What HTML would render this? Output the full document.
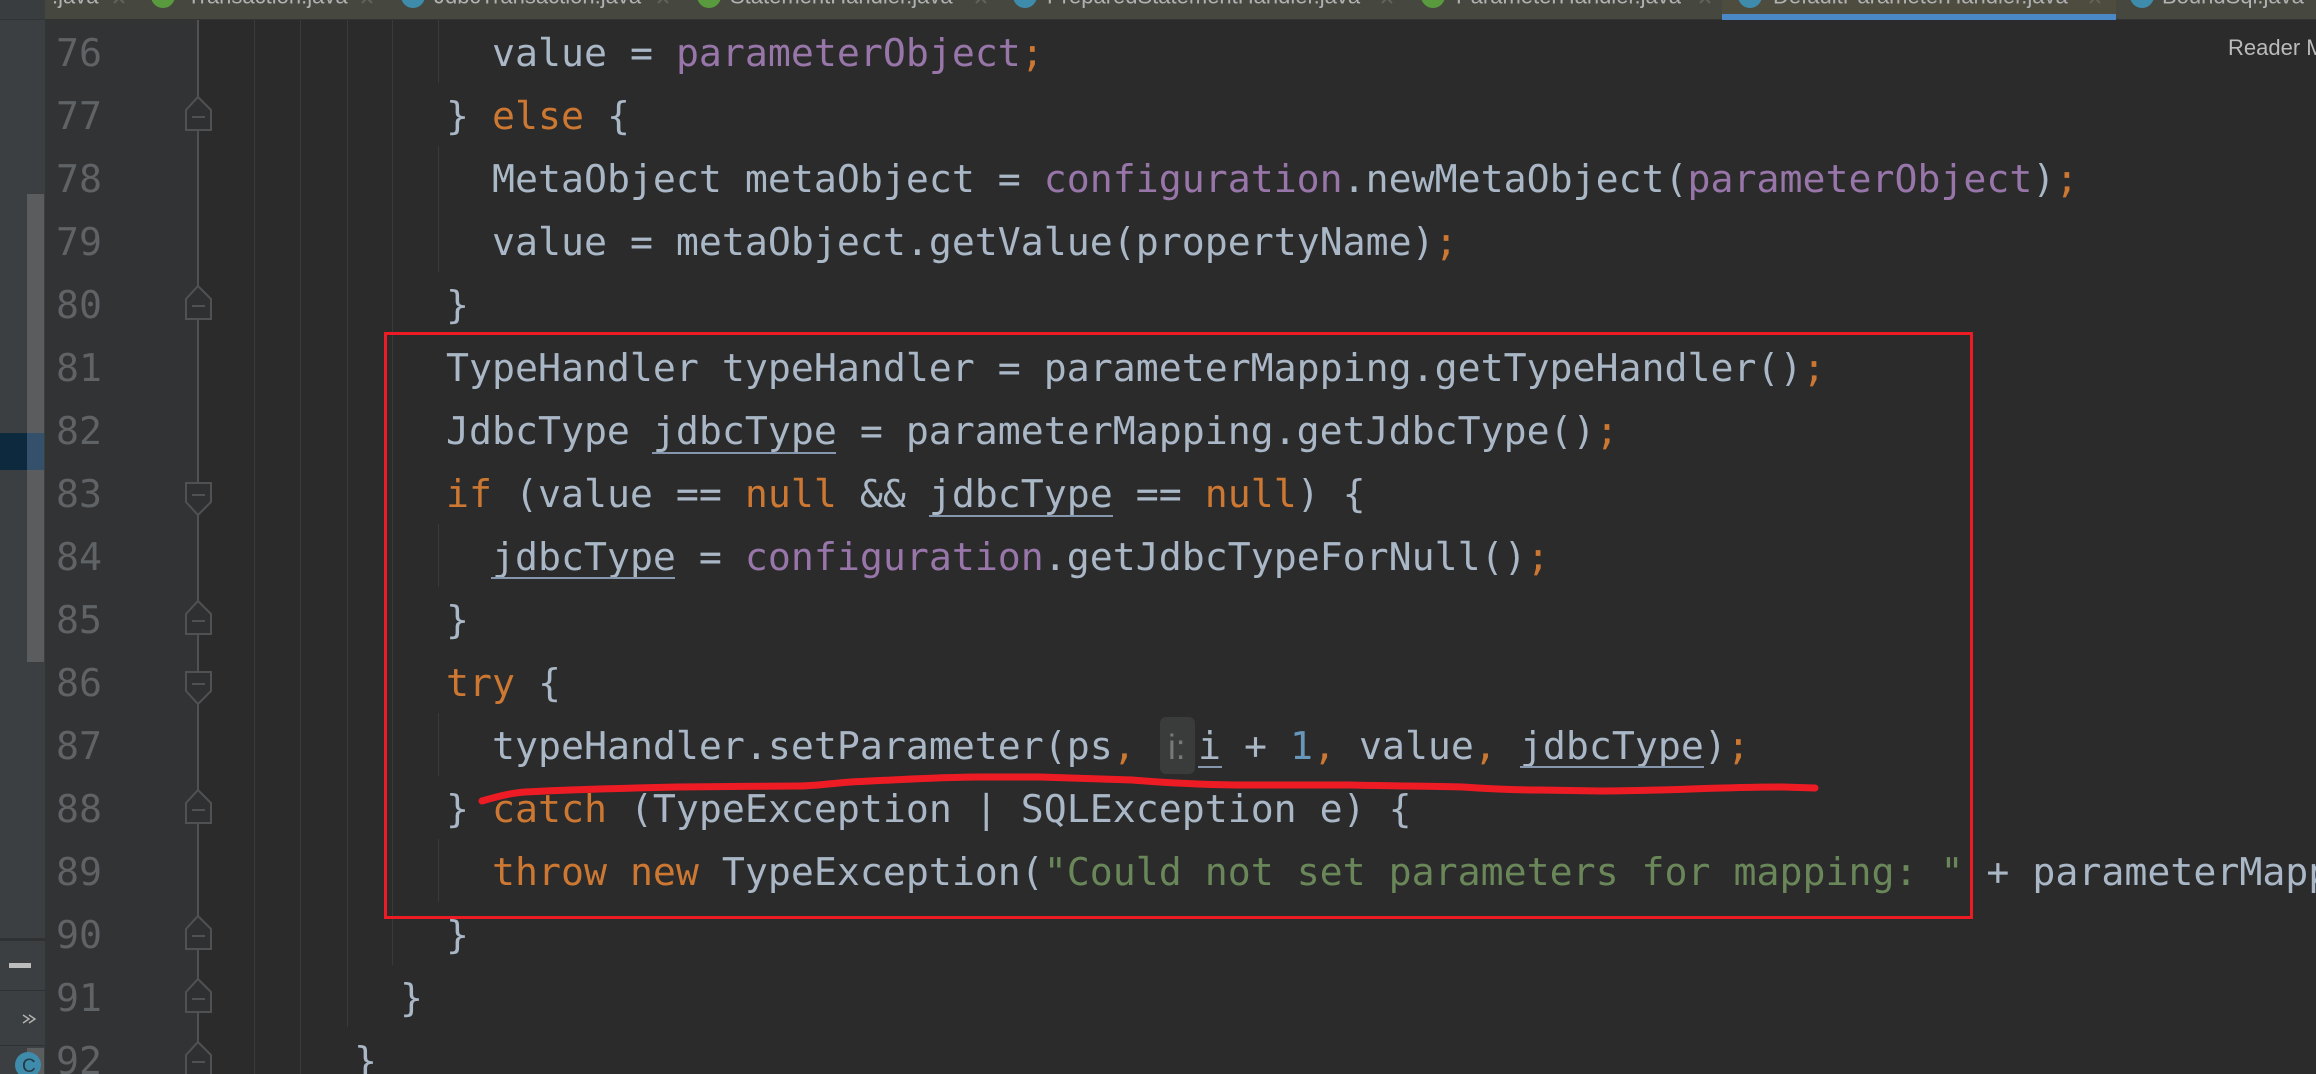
<!DOCTYPE html>
<html lang="en">
<head>
<meta charset="utf-8">
<title>DefaultParameterHandler.java</title>
<style>
html,body{margin:0;padding:0;background:#2b2b2b;width:2316px;height:1074px;overflow:hidden}
svg{display:block;position:absolute;left:0;top:0}
.c{font-family:"DejaVu Sans Mono","Liberation Mono",monospace;font-size:38.2px;fill:#a9b7c6;text-rendering:geometricPrecision}
.n{font-family:"DejaVu Sans Mono","Liberation Mono",monospace;font-size:38.2px;fill:#606366;text-rendering:geometricPrecision}
.o{fill:#cc7832}.p{fill:#9876aa}.g{fill:#6a8759}.b{fill:#6897bb}
.t{font-family:"Liberation Sans",sans-serif;font-size:22px;fill:#afb1b3}
.m{fill:none;stroke:#4f5153;stroke-width:2}
.u{fill:#8596ad}
</style>
</head>
<body>
<svg width="2316" height="1074" viewBox="0 0 2316 1074" xmlns="http://www.w3.org/2000/svg">
<!-- backgrounds -->
<rect width="2316" height="1074" fill="#2b2b2b"/>
<rect x="0" y="0" width="45" height="1074" fill="#3c3f41"/>
<rect x="45" y="0" width="153" height="1074" fill="#313335"/>
<rect x="0" y="0" width="45" height="19" fill="#3a3d3f"/>
<rect x="0" y="19" width="45" height="1" fill="#323436"/>
<rect x="45" y="0" width="2271" height="19" fill="#46473f"/>
<rect x="45" y="19" width="2271" height="1" fill="#333333"/>
<rect x="1722" y="0" width="394" height="14" fill="#4e4b3f"/>
<rect x="1722" y="14" width="394" height="6" fill="#4a88c7"/>

<!-- tabs -->
<g>
<circle cx="163" cy="-4" r="12" fill="#5a9a3e"/>
<circle cx="413" cy="-4" r="12" fill="#3e8bac"/>
<circle cx="709" cy="-4" r="12" fill="#5a9a3e"/>
<circle cx="1025" cy="-4" r="12" fill="#3e8bac"/>
<circle cx="1433" cy="-4" r="12" fill="#5a9a3e"/>
<circle cx="1750" cy="-4" r="12" fill="#3e8bac"/>
<circle cx="2142" cy="-4" r="12" fill="#3e8bac"/>
<text class="t" x="52" y="3.5">.java</text>
<text class="t" x="187" y="3.5">Transaction.java</text>
<text class="t" x="434" y="3.5">JdbcTransaction.java</text>
<text class="t" x="730" y="3.5">StatementHandler.java</text>
<text class="t" x="1047" y="3.5">PreparedStatementHandler.java</text>
<text class="t" x="1456" y="3.5">ParameterHandler.java</text>
<text class="t" x="1773" y="3.5">DefaultParameterHandler.java</text>
<text class="t" x="2162" y="3.5">BoundSql.java</text>
<path d="M114 3l5-5 5 5M362 3l5-5 5 5M658 3l5-5 5 5M976 3l5-5 5 5M1382 3l5-5 5 5M1700 3l5-5 5 5M2090 3l5-5 5 5" fill="none" stroke="#626359" stroke-width="2"/>
</g>

<text x="2228" y="55" font-family="'Liberation Sans',sans-serif" font-size="22" fill="#bbbbbb">Reader M</text>

<!-- left strip -->
<rect x="27" y="194" width="17" height="468" fill="#5a5c5e"/>
<rect x="0" y="433" width="27" height="37" fill="#0d293e"/>
<rect x="27" y="433" width="17" height="37" fill="#34506a"/>
<rect x="0" y="938" width="45" height="3" fill="#2f3132"/>
<rect x="9" y="963" width="22" height="5" fill="#bdbdbd"/>
<rect x="0" y="990" width="45" height="1" fill="#2f3132"/>
<path d="M23 1015l6 4-6 4M29 1015l6 4-6 4" fill="none" stroke="#b5b5b5" stroke-width="1.4"/>
<rect x="0" y="1045" width="45" height="1" fill="#2f3132"/>
<rect x="27" y="1048" width="17" height="26" fill="#5a5c5e"/>
<circle cx="28" cy="1065" r="13" fill="#3e8bac"/>
<text x="22" y="1072" font-family="'Liberation Sans',sans-serif" font-size="19" fill="#243a44">C</text>

<!-- indent guides -->
<g fill="#393b3b">
<rect x="254" y="20" width="1" height="1054"/>
<rect x="300" y="20" width="1" height="1054"/>
<rect x="347" y="20" width="1" height="1007"/>
<rect x="392" y="20" width="1" height="945"/>
<rect x="438" y="20" width="1" height="63"/>
<rect x="438" y="146" width="1" height="126"/>
<rect x="438" y="524" width="1" height="63"/>
<rect x="438" y="713" width="1" height="63"/>
<rect x="438" y="839" width="1" height="63"/>
</g>

<!-- fold column -->
<rect x="197" y="20" width="2" height="1054" fill="#4f5153"/>
<g class="markers">
<g><path class="m" d="M198 97L211 110V130H186V110Z" style="fill:#2f3032"/><path d="M192 117H205" class="m"/></g>
<g><path class="m" d="M198 286L211 299V319H186V299Z" style="fill:#2f3032"/><path d="M192 306H205" class="m"/></g>
<g><path class="m" d="M186 483H211V502L198 515L186 502Z" style="fill:#2f3032"/><path d="M192 495H205" class="m"/></g>
<g><path class="m" d="M198 601L211 614V634H186V614Z" style="fill:#2f3032"/><path d="M192 621H205" class="m"/></g>
<g><path class="m" d="M186 672H211V691L198 704L186 691Z" style="fill:#2f3032"/><path d="M192 684H205" class="m"/></g>
<g><path class="m" d="M198 790L211 803V823H186V803Z" style="fill:#2f3032"/><path d="M192 810H205" class="m"/></g>
<g><path class="m" d="M198 916L211 929V949H186V929Z" style="fill:#2f3032"/><path d="M192 936H205" class="m"/></g>
<g><path class="m" d="M198 979L211 992V1012H186V992Z" style="fill:#2f3032"/><path d="M192 999H205" class="m"/></g>
<g><path class="m" d="M198 1042L211 1055V1075H186V1055Z" style="fill:#2f3032"/><path d="M192 1062H205" class="m"/></g>
</g>

<!-- line numbers -->
<g>
<text class="n" x="56" y="66">76</text>
<text class="n" x="56" y="129">77</text>
<text class="n" x="56" y="192">78</text>
<text class="n" x="56" y="255">79</text>
<text class="n" x="56" y="318">80</text>
<text class="n" x="56" y="381">81</text>
<text class="n" x="56" y="444">82</text>
<text class="n" x="56" y="507">83</text>
<text class="n" x="56" y="570">84</text>
<text class="n" x="56" y="633">85</text>
<text class="n" x="56" y="696">86</text>
<text class="n" x="56" y="759">87</text>
<text class="n" x="56" y="822">88</text>
<text class="n" x="56" y="885">89</text>
<text class="n" x="56" y="948">90</text>
<text class="n" x="56" y="1011">91</text>
<text class="n" x="56" y="1074">92</text>
</g>

<!-- code -->
<g>
<text class="c" x="492" y="66">value = <tspan class="p">parameterObject</tspan><tspan class="o">;</tspan></text>
<text class="c" x="446" y="129">} <tspan class="o">else</tspan> {</text>
<text class="c" x="492" y="192">MetaObject metaObject = <tspan class="p">configuration</tspan>.newMetaObject(<tspan class="p">parameterObject</tspan>)<tspan class="o">;</tspan></text>
<text class="c" x="492" y="255">value = metaObject.getValue(propertyName)<tspan class="o">;</tspan></text>
<text class="c" x="446" y="318">}</text>
<text class="c" x="446" y="381">TypeHandler typeHandler = parameterMapping.getTypeHandler()<tspan class="o">;</tspan></text>
<text class="c" x="446" y="444">JdbcType jdbcType = parameterMapping.getJdbcType()<tspan class="o">;</tspan></text>
<text class="c" x="446" y="507"><tspan class="o">if</tspan> (value == <tspan class="o">null</tspan> &amp;&amp; jdbcType == <tspan class="o">null</tspan>) {</text>
<text class="c" x="492" y="570">jdbcType = <tspan class="p">configuration</tspan>.getJdbcTypeForNull()<tspan class="o">;</tspan></text>
<text class="c" x="446" y="633">}</text>
<text class="c" x="446" y="696"><tspan class="o">try</tspan> {</text>
<text class="c" x="492" y="759">typeHandler.setParameter(ps<tspan class="o">,</tspan></text>
<rect x="1160" y="717" width="35" height="57" rx="6" fill="#3a3b3b"/>
<text x="1168" y="759" font-family="'Liberation Sans',sans-serif" font-size="35" fill="#787878">i:</text>
<text class="c" x="1198" y="759">i + <tspan class="b">1</tspan><tspan class="o">,</tspan> value<tspan class="o">,</tspan> jdbcType)<tspan class="o">;</tspan></text>
<text class="c" x="446" y="822">} <tspan class="o">catch</tspan> (TypeException | SQLException e) {</text>
<text class="c" x="492" y="885"><tspan class="o">throw new</tspan> TypeException(<tspan class="g">"Could not set parameters for mapping: "</tspan> + parameterMapping</text>
<text class="c" x="446" y="948">}</text>
<text class="c" x="400" y="1011">}</text>
<text class="c" x="354" y="1074">}</text>
</g>

<!-- underlines -->
<g>
<rect class="u" x="652" y="452" width="184" height="2"/>
<rect class="u" x="929" y="515" width="184" height="2"/>
<rect class="u" x="491" y="577" width="184" height="2"/>
<rect class="u" x="1198" y="766" width="24" height="2"/>
<rect class="u" x="1520" y="766" width="184" height="2"/>
</g>

<!-- annotations -->
<rect x="385.5" y="333.5" width="1586" height="584" fill="none" stroke="#ed1c24" stroke-width="3"/>
<path d="M482 801C495 797 510 793 525 792C580 789 630 788 679 787C700 787 770 786 800 786C815 786 835 783 851 782C895 780 940 777 979 777L1040 777C1070 778 1100 779 1132 780C1170 783 1210 785 1249 785L1351 785C1390 786 1430 786 1463 787C1490 789 1515 790 1540 790L1600 791C1630 791 1660 790 1691 789C1720 788 1750 787 1783 787L1815 788" fill="none" stroke="#ed1c24" stroke-width="7" stroke-linecap="round" stroke-linejoin="round"/>
</svg>
</body>
</html>
